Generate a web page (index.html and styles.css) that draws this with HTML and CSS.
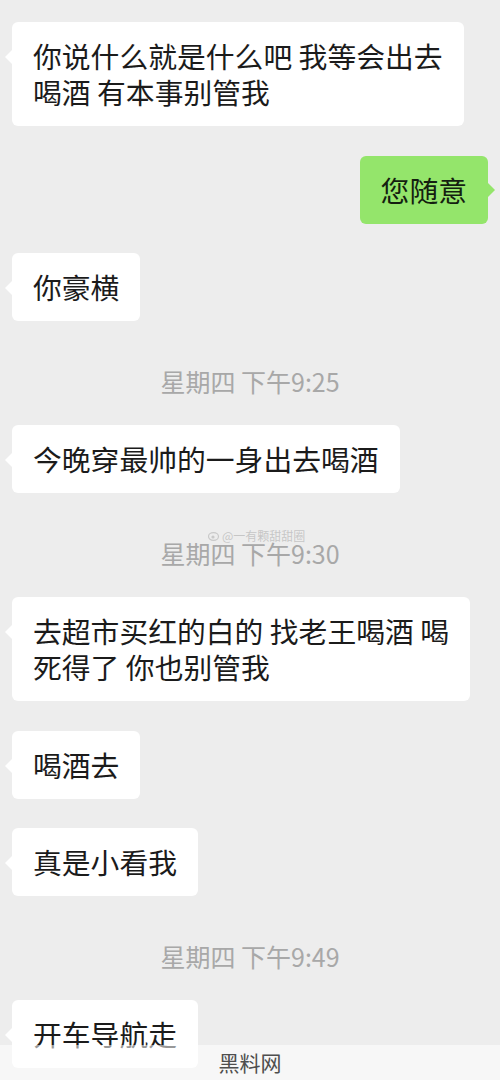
FILE: index.html
```html
<!DOCTYPE html>
<html lang="zh">
<head>
<meta charset="utf-8">
<link rel="stylesheet" href="styles.css">
</head>
<body>
<div class="chat">
  <div class="row left"><div class="bubble">你说什么就是什么吧 我等会出去<br>喝酒 有本事别管我</div></div>
  <div class="row right"><div class="bubble green">您随意</div></div>
  <div class="row left"><div class="bubble">你豪横</div></div>
  <div class="time">星期四 下午9:25</div>
  <div class="row left"><div class="bubble">今晚穿最帅的一身出去喝酒</div></div>
  <div class="time stamped">星期四 下午9:30<span class="mark"><svg width="12" height="11" viewBox="0 0 12 11"><ellipse cx="5.5" cy="6.5" rx="5" ry="3.8" fill="none" stroke="#c9c9c9" stroke-width="1.2"/><circle cx="5" cy="7" r="1.6" fill="#c9c9c9"/></svg>@一有颗甜甜圈</span></div>
  <div class="row left"><div class="bubble">去超市买红的白的 找老王喝酒 喝<br>死得了 你也别管我</div></div>
  <div class="row left"><div class="bubble">喝酒去</div></div>
  <div class="row left"><div class="bubble">真是小看我</div></div>
  <div class="time">星期四 下午9:49</div>
  <div class="row left"><div class="bubble">开车导航走</div></div>
</div>
<div class="footer">黑料网</div>
</body>
</html>
```
FILE: styles.css
```css
html, body {
  margin: 0;
  padding: 0;
  background: #ededed;
}
body {
  width: 500px;
  height: 1080px;
  overflow: hidden;
  position: relative;
  font-family: "Noto Sans CJK SC", "Noto Sans", sans-serif;
}
.chat {
  display: flex;
  flex-direction: column;
  gap: 29.5px;
  padding: 22px 12px 0 12px;
}
.row {
  display: flex;
}
.row.right {
  justify-content: flex-end;
}
.bubble {
  position: relative;
  background: #ffffff;
  color: #1b1b1b;
  font-size: 28.8px;
  line-height: 36px;
  padding: 16px 21px 16px 21px;
  border-radius: 6px;
  white-space: nowrap;
}
.row.left .bubble::before {
  content: "";
  position: absolute;
  left: -7px;
  top: 28px;
  border-style: solid;
  border-width: 7px 7px 7px 0;
  border-color: transparent #ffffff transparent transparent;
}
.bubble.green {
  background: #94e56b;
  color: #141f10;
}
.row.right .bubble::after {
  content: "";
  position: absolute;
  right: -7px;
  top: 27px;
  border-style: solid;
  border-width: 7px 0 7px 7px;
  border-color: transparent transparent transparent #94e56b;
}
.time {
  margin-top: 15px;
  text-align: center;
  font-size: 25px;
  line-height: 30px;
  color: #a8a8a8;
  position: relative;
}
.mark {
  position: absolute;
  left: 196px;
  top: -9px;
  font-size: 12px;
  line-height: 14px;
  color: rgba(185, 185, 185, 0.75);
  display: flex;
  align-items: center;
  gap: 2px;
}
.footer {
  position: absolute;
  left: 0;
  right: 0;
  bottom: 0;
  height: 35px;
  background: rgba(255, 255, 255, 0.55);
  text-align: center;
  font-size: 21px;
  line-height: 35px;
  color: #4e4e4e;
}
```
